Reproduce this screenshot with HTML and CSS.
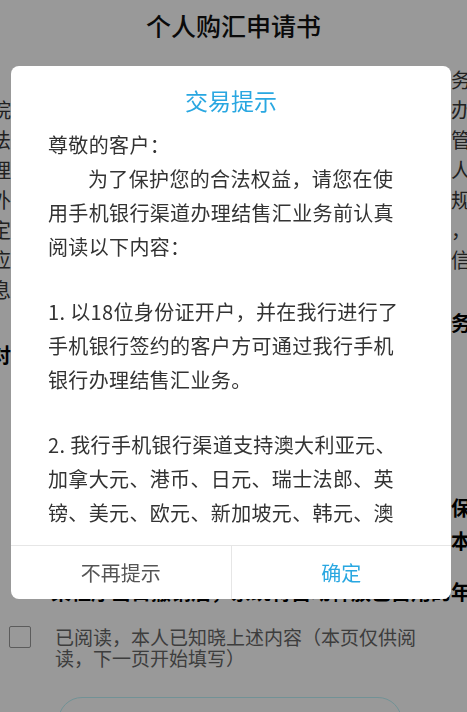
FILE: index.html
```html
<!DOCTYPE html>
<html lang="zh-CN">
<head>
<meta charset="utf-8">
<title>个人购汇申请书</title>
<link rel="stylesheet" href="styles.css">
</head>
<body>
<main class="page">
  <h1 class="page-title">个人购汇申请书</h1>
  <section class="doc">
    <p class="doc-p doc-intro">
      <span class="ln ln-first">为规范和便利个人办理外汇收支业务，现根据国务</span>
      <span class="ln">院及国家外汇管理局发布相关规定及《个人外汇管理办</span>
      <span class="ln">法》和《个人外汇管理办法实施细则》等，国家外汇管</span>
      <span class="ln">理局对个人结汇和个人购汇均实行年度总额管理，个人</span>
      <span class="ln">外汇年度总额为每人每年等值五万美元，需按照有关规</span>
      <span class="ln">定办理。个人办理结售汇业务时，须如实填写申请书，</span>
      <span class="ln">应对所填信息真实性负责，并授权本行依法报送相关信</span>
      <span class="ln">息。</span>
    </p>
    <p class="doc-p doc-head">
      <span class="ln ln-first">请您在办理个人购汇之前认真阅读并确认以下业务</span>
      <span class="ln">对应的须知事项：</span>
    </p>
    <p class="doc-p doc-list">
      <span class="ln">个人不得以分拆等方式规避外汇额度管理，并确保</span>
      <span class="ln">所购外汇须用于真实合法用途，否则相关责任由本人承担。</span>
    </p>
    <p class="doc-p doc-note">
      <span class="ln ln-first">※某程序当日撤销后，系统将自动释放已占用的年度额度。</span>
    </p>
  </section>
  <label class="agree">
    <span class="check"></span>
    <span class="agree-text">已阅读，本人已知晓上述内容（本页仅供阅读，下一页开始填写）</span>
  </label>
  <button class="next-btn" type="button">下一步</button>
</main>

<div class="mask"></div>

<div class="dialog" role="dialog" aria-labelledby="dlg-title">
  <h2 class="dlg-title" id="dlg-title">交易提示</h2>
  <div class="dlg-body">
    <p class="dlg-p">尊敬的客户：</p>
    <p class="dlg-p dlg-indent">为了保护您的合法权益，请您在使用手机银行渠道办理结售汇业务前认真阅读以下内容：</p>
    <p class="dlg-p dlg-gap">1. 以18位身份证开户，并在我行进行了手机银行签约的客户方可通过我行手机银行办理结售汇业务。</p>
    <p class="dlg-p dlg-gap">2. 我行手机银行渠道支持澳大利亚元、加拿大元、港币、日元、瑞士法郎、英镑、美元、欧元、新加坡元、韩元、澳门元等币种的结售汇业务。</p>
    <p class="dlg-p dlg-gap">3. 个人购汇需遵守国家外汇管理相关规定，所购外汇仅限用于真实合法的经常项目用途。</p>
  </div>
  <div class="dlg-actions">
    <button class="dlg-btn" type="button">不再提示</button>
    <button class="dlg-btn dlg-btn-primary" type="button">确定</button>
  </div>
</div>
</body>
</html>
```

FILE: styles.css
```css
html, body {
  margin: 0;
  padding: 0;
  overflow: hidden;
  height: 100%;
}

body {
  background: #ffffff;
  font-family: "Noto Sans CJK SC", "Noto Sans", sans-serif;
  color: #333333;
}

.page {
  width: 467px;
}

.page-title {
  margin: 0;
  height: 50px;
  line-height: 50px;
  font-size: 25px;
  font-weight: 500;
  text-align: center;
  color: #111111;
}

.doc {
  margin: 15px 0 0 -9px;
}

.doc-p {
  margin: 0;
  font-size: 20px;
  color: #383838;
}

.ln {
  display: block;
  white-space: nowrap;
}

.ln-first {
  padding-left: 40px;
}

.doc-intro {
  line-height: 30px;
}

.doc-head {
  margin-top: 2px;
  line-height: 32px;
  font-weight: 700;
  color: #000000;
}

.doc-list {
  margin-top: 120px;
  line-height: 33px;
  padding-left: 40px;
  font-weight: 700;
  color: #000000;
}

.doc-note {
  margin-top: 19px;
  line-height: 32px;
  font-weight: 700;
  color: #000000;
}

.agree {
  display: flex;
  align-items: flex-start;
  gap: 24px;
  margin-top: 18px;
  padding-left: 9px;
}

.check {
  flex: none;
  width: 22px;
  height: 22px;
  box-sizing: border-box;
  border: 1.5px solid #9a9a9a;
  border-radius: 2px;
  background: #ffffff;
}

.agree-text {
  width: 370px;
  font-size: 19px;
  line-height: 21px;
  color: #666666;
}

.next-btn {
  display: block;
  margin: 29px 0 0 58px;
  width: 344px;
  height: 48px;
  box-sizing: border-box;
  border: 1.5px solid #bdf4fa;
  border-radius: 24px;
  background: #ffffff;
  font-family: inherit;
  font-size: 20px;
  color: #29a7e1;
}

.mask {
  position: fixed;
  inset: 0;
  background: rgba(0, 0, 0, 0.4);
}

.dialog {
  position: fixed;
  top: 66px;
  left: 11px;
  width: 440px;
  height: 533px;
  display: flex;
  flex-direction: column;
  background: #ffffff;
  border-radius: 8px;
  overflow: hidden;
}

.dlg-title {
  margin: 0;
  padding-top: 20px;
  line-height: 28px;
  font-size: 23px;
  font-weight: 400;
  text-align: center;
  color: #29a7e1;
}

.dlg-body {
  flex: none;
  margin-top: 14px;
  height: 402px;
  overflow: hidden;
  padding-left: 37px;
}

.dlg-p {
  margin: 0;
  width: 356px;
  font-size: 20px;
  line-height: 34px;
  letter-spacing: 0.35px;
  color: #333333;
}

.dlg-indent {
  text-indent: 2em;
}

.dlg-gap {
  margin-top: 31px;
}

.dlg-actions {
  margin-top: auto;
  display: flex;
  height: 54px;
  box-sizing: border-box;
  border-top: 1px solid #e6e6e6;
}

.dlg-btn {
  flex: 1;
  padding: 0;
  border: none;
  background: none;
  font-family: inherit;
  font-size: 20px;
  color: #555555;
}

.dlg-btn-primary {
  border-left: 1px solid #e6e6e6;
  color: #29a7e1;
}
```
